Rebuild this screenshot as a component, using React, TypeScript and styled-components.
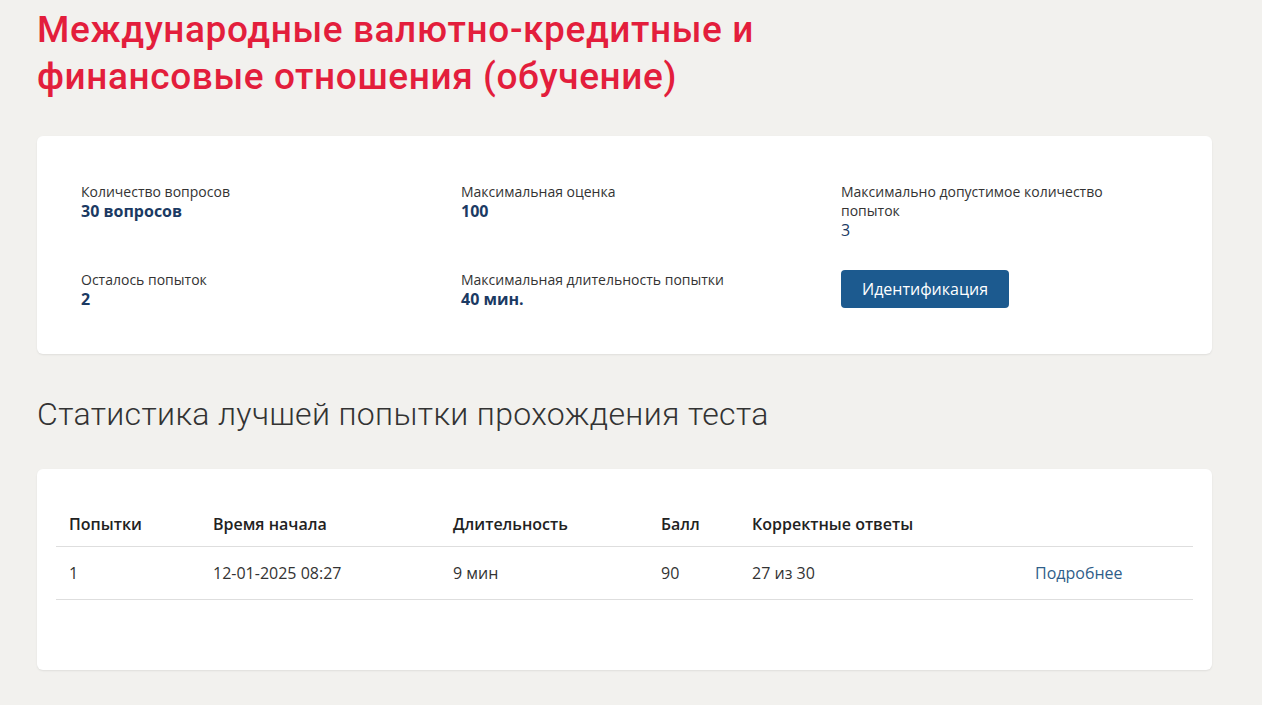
import { FC } from 'react';
import styled, { createGlobalStyle } from 'styled-components';

const GlobalStyle = createGlobalStyle`
    html, body {
        margin: 0;
        padding: 0;
        background: #f2f1ee;
        font-family: 'Open Sans', 'Noto Sans', sans-serif;
        color: #333;
    }
`;

const Page = styled.div`
    padding: 6px 50px 36px 37px;
`;

const Title = styled.h1`
    margin: 0 0 36px;
    max-width: 780px;
    font-family: Roboto, 'Liberation Sans', sans-serif;
    font-size: 37px;
    line-height: 47px;
    letter-spacing: 0.6px;
    font-weight: 500;
    color: #e31e3c;
`;

const Card = styled.section<{ $pad: string }>`
    background: #fff;
    border-radius: 6px;
    box-shadow: 0 1px 2px rgba(0, 0, 0, 0.08);
    padding: ${({ $pad }) => $pad};
`;

const InfoGrid = styled.div`
    display: grid;
    grid-template-columns: 380px 380px 1fr;
    row-gap: 29px;
`;

const Info = styled.div`
    display: flex;
    flex-direction: column;
    padding-right: 60px;
`;

const Label = styled.span`
    font-size: 14px;
    line-height: 19px;
    color: #333;
`;

const Value = styled.span<{ $bold?: boolean }>`
    font-size: 16px;
    line-height: 21px;
    font-weight: ${({ $bold }) => ($bold ? 700 : 400)};
    color: #1b3a63;
`;

const Button = styled.button`
    align-self: flex-start;
    height: 38px;
    width: 168px;
    border: none;
    border-radius: 4px;
    background: #1c5a8f;
    color: #fff;
    font-family: 'Open Sans', 'Noto Sans', sans-serif;
    font-size: 16px;
    cursor: pointer;
`;

const SubTitle = styled.h2`
    margin: 40px 0 35px;
    font-family: Roboto, 'Liberation Sans', sans-serif;
    font-size: 32px;
    line-height: 40px;
    letter-spacing: 0.35px;
    font-weight: 300;
    color: #333;
`;

const Table = styled.table`
    width: 100%;
    table-layout: fixed;
    border-collapse: collapse;
`;

const Th = styled.th<{ $w?: number }>`
    box-sizing: border-box;
    width: ${({ $w }) => ($w ? `${$w}px` : 'auto')};
    height: 43px;
    padding: 0 13px;
    text-align: left;
    font-size: 16px;
    font-weight: 600;
    color: #222;
    border-bottom: 1px solid #dedede;
`;

const Td = styled.td`
    height: 52px;
    padding: 0 13px;
    font-size: 16px;
    color: #333;
    border-bottom: 1px solid #dedede;
`;

const Link = styled.a`
    color: #2f5e8a;
    text-decoration: none;
`;

const infos = [
    { label: 'Количество вопросов', value: '30 вопросов', bold: true },
    { label: 'Максимальная оценка', value: '100', bold: true },
    { label: 'Максимально допустимое количество попыток', value: '3' },
    { label: 'Осталось попыток', value: '2', bold: true },
    { label: 'Максимальная длительность попытки', value: '40 мин.', bold: true },
];

const App: FC = () => (
    <Page>
        <GlobalStyle />
        <Title>Международные валютно-кредитные и финансовые отношения (обучение)</Title>
        <Card $pad="46px 44px 44px">
            <InfoGrid>
                {infos.map((item) => (
                    <Info key={item.label}>
                        <Label>{item.label}</Label>
                        <Value $bold={item.bold}>{item.value}</Value>
                    </Info>
                ))}
                <Info>
                    <Button>Идентификация</Button>
                </Info>
            </InfoGrid>
        </Card>
        <SubTitle>Статистика лучшей попытки прохождения теста</SubTitle>
        <Card $pad="34px 19px 70px">
            <Table>
                <thead>
                    <tr>
                        <Th $w={144}>Попытки</Th>
                        <Th $w={240}>Время начала</Th>
                        <Th $w={208}>Длительность</Th>
                        <Th $w={91}>Балл</Th>
                        <Th $w={283}>Корректные ответы</Th>
                        <Th />
                    </tr>
                </thead>
                <tbody>
                    <tr>
                        <Td>1</Td>
                        <Td>12-01-2025 08:27</Td>
                        <Td>9 мин</Td>
                        <Td>90</Td>
                        <Td>27 из 30</Td>
                        <Td>
                            <Link href="#">Подробнее</Link>
                        </Td>
                    </tr>
                </tbody>
            </Table>
        </Card>
    </Page>
);

export default App;
